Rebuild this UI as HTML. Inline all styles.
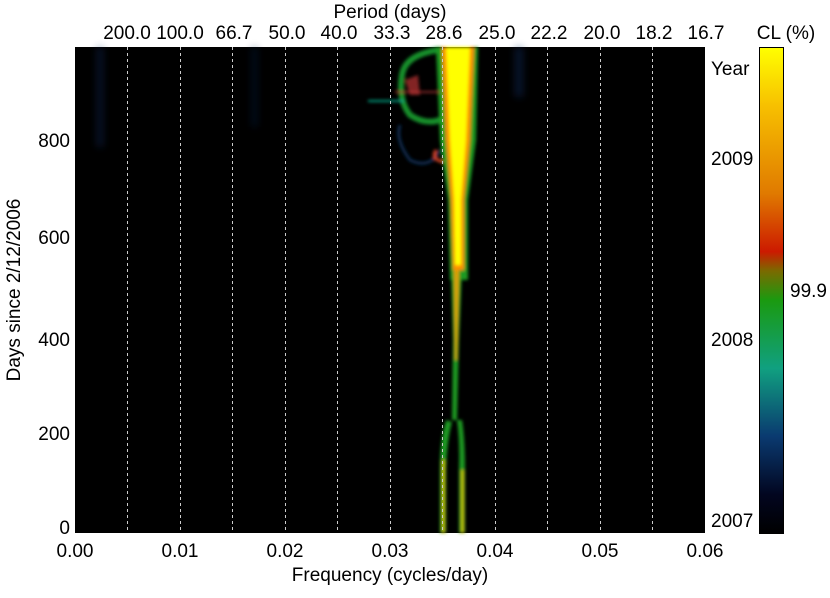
<!DOCTYPE html>
<html><head><meta charset="utf-8"><style>
body{margin:0;background:#fff;width:830px;height:593px;overflow:hidden;font-family:"Liberation Sans",sans-serif;}
svg text{font-family:"Liberation Sans",sans-serif;font-size:19px;fill:#000;}
</style></head><body>
<svg width="830" height="593" xmlns="http://www.w3.org/2000/svg">
<defs>
<linearGradient id="cb" x1="0" y1="0" x2="0" y2="1">
<stop offset="0" stop-color="#ffff00"/>
<stop offset="0.12" stop-color="#f7c000"/>
<stop offset="0.3" stop-color="#e07a00"/>
<stop offset="0.42" stop-color="#cc1a00"/>
<stop offset="0.46" stop-color="#7a6a00"/>
<stop offset="0.52" stop-color="#1a9a10"/>
<stop offset="0.66" stop-color="#10a080"/>
<stop offset="0.8" stop-color="#0a3a70"/>
<stop offset="0.92" stop-color="#020620"/>
<stop offset="1" stop-color="#000"/>
</linearGradient>
<filter id="b1"><feGaussianBlur stdDeviation="1.5"/></filter>
<filter id="b2"><feGaussianBlur stdDeviation="4"/></filter>
</defs>
<rect x="75" y="47" width="630" height="486" fill="#000"/>
<g filter="url(#b2)" opacity="0.45">
<rect x="97" y="47" width="6" height="100" fill="#12306a"/>
<rect x="252" y="47" width="5" height="80" fill="#0c2050"/>
<rect x="515" y="47" width="8" height="50" fill="#12306a"/>
</g>
<g filter="url(#b1)">
<!-- upper left green arc structure -->
<path d="M438 50 Q405 55 402 75 Q398 100 410 115 Q425 125 440 120" fill="none" stroke="#16902a" stroke-width="6"/>
<path d="M405 80 L418 75 L420 95 L410 95 Z" fill="#b33" opacity="0.7"/>
<path d="M400 125 Q395 140 410 160 Q430 170 440 150" fill="none" stroke="#0c2a50" stroke-width="3"/>
<path d="M436 150 Q430 160 445 162 L455 160" fill="none" stroke="#d42" stroke-width="3"/>
<!-- main band outer green -->
<path d="M436 47 L478 47 L476 140 L468 200 L468 280 L450 280 L448 200 L440 140 Z" fill="#1a9a20"/>
<path d="M442 47 L474 47 L470 140 L464 200 L464 270 L453 270 L451 200 L446 140 Z" fill="#ff9000"/>
<path d="M446 47 L470 47 L466 140 L461 200 L461 265 L455 265 L454 200 L450 140 Z" fill="#ffff00"/>
<!-- middle single line -->
<path d="M451 270 L462 270 L459 340 L457 420 L452 420 L453 340 Z" fill="#1a9a20"/>
<path d="M454 270 L459 270 L457 360 L455 360 Z" fill="#e0a000"/>
<!-- two bottom lines -->
<path d="M446 420 Q440 440 440 470 L440 533 L446 533 L446 470 Q447 440 452 422 Z" fill="#1a9a20"/>
<path d="M457 420 Q460 440 459 470 L459 533 L465 533 L465 470 Q465 440 462 420 Z" fill="#1a9a20"/>
<rect x="442" y="460" width="3" height="73" fill="#c0c000"/>
<rect x="461" y="470" width="3" height="63" fill="#c0c000"/>
<rect x="368" y="100" width="36" height="2" fill="#10a080"/>
<rect x="395" y="91" width="45" height="2" fill="#b33" opacity="0.7"/>
</g>
<g stroke="#ccc" stroke-width="1" stroke-dasharray="3,3">
<line x1="127.5" y1="47" x2="127.5" y2="533"/>
<line x1="180.5" y1="47" x2="180.5" y2="533"/>
<line x1="232.5" y1="47" x2="232.5" y2="533"/>
<line x1="285.5" y1="47" x2="285.5" y2="533"/>
<line x1="337.5" y1="47" x2="337.5" y2="533"/>
<line x1="390.5" y1="47" x2="390.5" y2="533"/>
<line x1="442.5" y1="47" x2="442.5" y2="533"/>
<line x1="495.5" y1="47" x2="495.5" y2="533"/>
<line x1="547.5" y1="47" x2="547.5" y2="533"/>
<line x1="600.5" y1="47" x2="600.5" y2="533"/>
<line x1="652.5" y1="47" x2="652.5" y2="533"/>
</g>
<g text-anchor="middle">
<text x="390" y="18">Period (days)</text>
<text x="127" y="39">200.0</text><text x="180" y="39">100.0</text><text x="234" y="39">66.7</text>
<text x="287" y="39">50.0</text><text x="339" y="39">40.0</text><text x="392" y="39">33.3</text>
<text x="444" y="39">28.6</text><text x="497" y="39">25.0</text><text x="549" y="39">22.2</text>
<text x="602" y="39">20.0</text><text x="654" y="39">18.2</text><text x="706" y="39">16.7</text>
<text x="75" y="557">0.00</text><text x="180" y="557">0.01</text><text x="285" y="557">0.02</text>
<text x="390" y="557">0.03</text><text x="495" y="557">0.04</text><text x="600" y="557">0.05</text>
<text x="705" y="557">0.06</text>
<text x="390" y="581">Frequency (cycles/day)</text>
<text x="786" y="39">CL (%)</text>
</g>
<g text-anchor="end">
<text x="70" y="534">0</text><text x="70" y="440">200</text><text x="70" y="346">400</text>
<text x="70" y="244">600</text><text x="70" y="147">800</text>
</g>
<text transform="translate(20,290) rotate(-90)" text-anchor="middle">Days since 2/12/2006</text>
<text x="711" y="75">Year</text>
<text x="711" y="165">2009</text>
<text x="711" y="346">2008</text>
<text x="711" y="527">2007</text>
<rect x="759.5" y="47.5" width="24" height="486" fill="url(#cb)" stroke="#000"/>
<text x="790" y="297">99.9</text>
</svg>
</body></html>
